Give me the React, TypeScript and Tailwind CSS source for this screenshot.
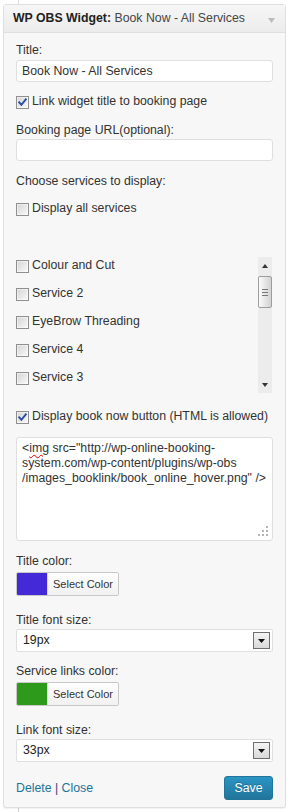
import React from "react"

const services = ["Colour and Cut", "Service 2", "EyeBrow Threading", "Service 4", "Service 3"]

function CheckBox({ checked }: { checked?: boolean }): React.ReactElement {
    return (
        <svg width="13" height="13" viewBox="0 0 13 13" className="shrink-0 mt-[2px]">
            <defs>
                <linearGradient id="cbfill" x1="0" y1="0" x2="1" y2="1">
                    <stop offset="0" stopColor="#d6d6d6" />
                    <stop offset="1" stopColor="#f8f8f8" />
                </linearGradient>
            </defs>
            <rect x="0.5" y="0.5" width="12" height="12" fill="#ffffff" stroke="#8f8f8f" />
            <rect x="1.5" y="1.5" width="10" height="10" fill="url(#cbfill)" />
            {checked && (
                <path d="M3.2 6.4 L5.4 8.8 L9.8 3.4" stroke="#2d4fa5" strokeWidth="2" fill="none" strokeLinecap="square" />
            )}
        </svg>
    )
}

function CheckRow({ label, checked, className }: { label: string; checked?: boolean; className?: string }): React.ReactElement {
    return (
        <div className={`flex items-start gap-[3px] leading-[15px] ${className ?? ""}`}>
            <CheckBox checked={checked} />
            <span>{label}</span>
        </div>
    )
}

function ColorButton({ color }: { color: string }): React.ReactElement {
    return (
        <div className="mt-[3px] flex h-[24px] w-[103px] overflow-hidden rounded-[2px] border border-[#c8c8c8]">
            <div className={`w-[30px] ${color}`} />
            <div className="flex flex-1 items-center justify-center border-l border-[#dcdcdc] bg-gradient-to-b from-[#fefefe] to-[#f1f1f1] text-[11px] text-[#333]">
                Select Color
            </div>
        </div>
    )
}

function SelectBox({ value }: { value: string }): React.ReactElement {
    return (
        <div className="mt-[1px] flex h-[23px] items-center rounded-[2px] border border-[#dfdfdf] bg-white pl-[6px] pr-[2px]">
            <span className="flex-1 leading-[21px] text-[#222]">{value}</span>
            <div className="flex h-[17px] w-[17px] items-center justify-center border border-[#6f6f6f] bg-gradient-to-b from-[#f4f4f4] to-[#d9d9d9]">
                <svg width="7" height="4" viewBox="0 0 7 4">
                    <path d="M0 0 H7 L3.5 4 Z" fill="#111" />
                </svg>
            </div>
        </div>
    )
}

function ScrollBar(): React.ReactElement {
    return (
        <div className="flex h-full w-[16px] flex-col border-x border-[#f7f7f7] bg-[#ececec]">
            <div className="flex h-[17px] items-center justify-center">
                <svg width="6" height="4" viewBox="0 0 6 4">
                    <path d="M0 4 H6 L3 0 Z" fill="#333" />
                </svg>
            </div>
            <div className="mt-[2px] flex h-[32px] flex-col items-center justify-center gap-[2px] rounded-[2px] border border-[#9d9d9d] bg-gradient-to-r from-[#fbfbfb] to-[#d2d2d2]">
                <div className="h-px w-[6px] bg-[#777]" />
                <div className="h-px w-[6px] bg-[#777]" />
                <div className="h-px w-[6px] bg-[#777]" />
            </div>
            <div className="flex-1" />
            <div className="flex h-[17px] items-center justify-center">
                <svg width="6" height="4" viewBox="0 0 6 4">
                    <path d="M0 0 H6 L3 4 Z" fill="#333" />
                </svg>
            </div>
        </div>
    )
}

function App(): React.ReactElement {
    return (
        <div className="h-[812px] w-[293px] overflow-hidden bg-white font-['Liberation_Sans',Arial,sans-serif] text-[12.3px] text-[#333]">
            <div className="ml-[18px] h-[4px] w-px bg-[#dedede]" />
            <div className="ml-[3px] w-[283px] rounded-[3px] border border-[#dfdfdf] bg-[#f7f7f7] shadow-[0_1px_1px_rgba(0,0,0,0.06)]">
                <div className="flex h-[28px] items-start justify-between border-b border-[#dfdfdf] bg-gradient-to-b from-[#f6f6f6] to-[#ececec] pl-[9px] pr-[10px] pt-[6px]">
                    <div className="leading-[15px] text-[#464646]">
                        <span className="font-bold text-[#222]">WP OBS Widget:</span> Book Now - All Services
                    </div>
                    <svg width="7" height="5" viewBox="0 0 7 5" className="mt-[7px]">
                        <path d="M0 0 H7 L3.5 5 Z" fill="#bcbcbc" />
                    </svg>
                </div>

                <div className="px-[12px] pb-[7px] pt-[10px]">
                    <div className="leading-[15px]">Title:</div>
                    <div className="mt-[2px] h-[22px] rounded-[3px] border border-[#dfdfdf] bg-white pl-[5px] leading-[20px] text-[#333]">
                        Book Now - All Services
                    </div>
                    <CheckRow className="mt-[12px]" checked label="Link widget title to booking page" />

                    <div className="mt-[14px] leading-[15px]">Booking page URL(optional):</div>
                    <div className="mt-[1px] h-[22px] rounded-[3px] border border-[#dfdfdf] bg-white" />

                    <div className="mt-[13px] leading-[15px]">Choose services to display:</div>
                    <CheckRow className="mt-[12px]" label="Display all services" />

                    <div className="mt-[41px] flex h-[136px]">
                        <div className="flex-1 overflow-hidden pt-[1px]">
                            {services.map((s) => (
                                <CheckRow key={s} className="h-[28px]" label={s} />
                            ))}
                        </div>
                        <ScrollBar />
                    </div>

                    <CheckRow className="mt-[16px]" checked label="Display book now button (HTML is allowed)" />
                    <div className="relative mt-[13px] h-[104px] rounded-[3px] border border-[#dfdfdf] bg-white pl-[5px] pt-[3px] leading-[15px] text-[#333]">
                        <div className="whitespace-nowrap">
                            &lt;<span className="underline decoration-[#e00000] decoration-wavy decoration-1 underline-offset-2">img</span> src="http://wp-online-booking-
                        </div>
                        <div className="whitespace-nowrap">system.com/wp-content/plugins/wp-obs</div>
                        <div className="whitespace-nowrap">/images_booklink/book_online_hover.png" /&gt;</div>
                        <svg width="11" height="11" viewBox="0 0 11 11" className="absolute bottom-[3px] right-[3px]">
                            <g fill="#b4b4b4">
                                <rect x="8" y="0" width="2" height="2" />
                                <rect x="4" y="4" width="2" height="2" />
                                <rect x="8" y="4" width="2" height="2" />
                                <rect x="0" y="8" width="2" height="2" />
                                <rect x="4" y="8" width="2" height="2" />
                                <rect x="8" y="8" width="2" height="2" />
                            </g>
                        </svg>
                    </div>

                    <div className="mt-[13px] leading-[15px]">Title color:</div>
                    <ColorButton color="bg-[#4429d6]" />

                    <div className="mt-[17px] leading-[15px]">Title font size:</div>
                    <SelectBox value="19px" />

                    <div className="mt-[12px] leading-[15px]">Service links color:</div>
                    <ColorButton color="bg-[#2e9a1c]" />

                    <div className="mt-[17px] leading-[15px]">Link font size:</div>
                    <SelectBox value="33px" />

                    <div className="mt-[14px] flex h-[24px] items-center justify-between">
                        <div className="leading-[15px]">
                            <span className="text-[#21759b]">Delete</span>
                            <span className="text-[#4b3a78]"> | </span>
                            <span className="text-[#21759b]">Close</span>
                        </div>
                        <div className="flex h-[24px] w-[49px] items-center justify-center rounded-[3px] border border-[#21759b] bg-gradient-to-b from-[#2a95c5] to-[#21759b] text-white [text-shadow:0_-1px_0_rgba(0,0,0,0.2)]">
                            Save
                        </div>
                    </div>
                </div>
            </div>
            <div className="ml-[18px] h-[5px] w-px bg-[#cfcfcf]" />
        </div>
    )
}

export default App
